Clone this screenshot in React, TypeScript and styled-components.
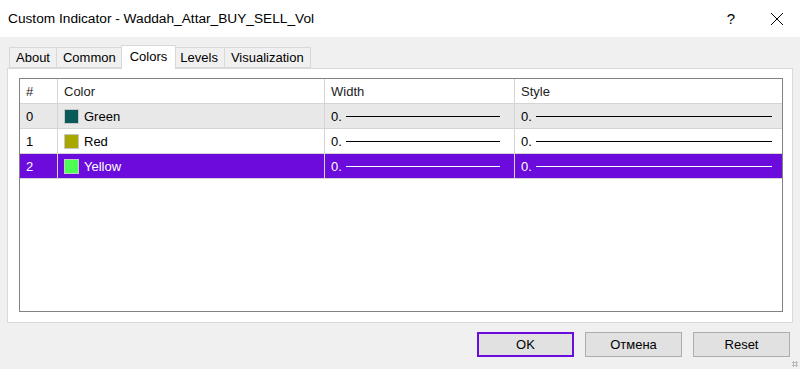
import styled, { createGlobalStyle } from "styled-components";

const GlobalStyle = createGlobalStyle`
  html, body {
    margin: 0;
    padding: 0;
    background: #f0f0f0;
  }
  * {
    box-sizing: border-box;
  }
`;

const Window = styled.div`
  position: relative;
  width: 800px;
  height: 369px;
  display: flex;
  flex-direction: column;
  background: #f0f0f0;
  font-family: "Liberation Sans", Arial, sans-serif;
  color: #000;
  overflow: hidden;
`;

const TitleBar = styled.div`
  height: 37px;
  display: flex;
  align-items: center;
  background: #fff;
  padding-left: 8px;
`;

const Title = styled.div`
  flex: 1;
  font-size: 13.7px;
  color: #000;
`;

const TitleButton = styled.div`
  width: 46px;
  height: 37px;
  display: flex;
  align-items: center;
  justify-content: center;
  font-size: 15px;
  color: #000;
`;

const Body = styled.div`
  flex: 1;
  display: flex;
  flex-direction: column;
  padding: 8px 7px 0 7px;
`;

const TabStrip = styled.div`
  display: flex;
  align-items: flex-end;
  height: 23px;
  padding-left: 2px;
  position: relative;
  z-index: 1;
`;

const Tab = styled.div<{ $active?: boolean }>`
  height: ${(p) => (p.$active ? "24px" : "21px")};
  padding: ${(p) => (p.$active ? "0 8px 3px 8px" : "0 6px")};
  margin: ${(p) => (p.$active ? "0 -2px -1px -2px" : "0")};
  display: flex;
  align-items: center;
  font-size: 13px;
  background: ${(p) => (p.$active ? "#fff" : "#f0f0f0")};
  border: 1px solid #d9d9d9;
  border-bottom: ${(p) => (p.$active ? "none" : "1px solid #d9d9d9")};
  border-left: ${(p) => (p.$active ? "1px solid #d9d9d9" : "none")};
  position: relative;
  z-index: ${(p) => (p.$active ? 2 : 1)};
  &:first-child {
    border-left: 1px solid #d9d9d9;
  }
`;

const Panel = styled.div`
  height: 255px;
  background: #fff;
  border: 1px solid #d9d9d9;
  padding: 9px 9px 10px 11px;
  display: flex;
`;

const ListView = styled.div`
  flex: 1;
  border: 1px solid #828282;
  background: #fff;
  display: flex;
  flex-direction: column;
`;

const Row = styled.div<{ $bg: string; $fg: string }>`
  display: grid;
  grid-template-columns: 37px 267px 190px 1fr;
  height: 25px;
  background: ${(p) => p.$bg};
  color: ${(p) => p.$fg};
  border-bottom: 1px solid #d5d5d5;
  font-size: 13px;
`;

const Cell = styled.div<{ $first?: boolean }>`
  display: flex;
  align-items: center;
  padding-left: 6px;
  border-left: ${(p) => (p.$first ? "none" : "1px solid #d5d5d5")};
  white-space: nowrap;
  overflow: hidden;
`;

const Swatch = styled.span<{ $color: string }>`
  width: 15px;
  height: 15px;
  margin-right: 5px;
  background: ${(p) => p.$color};
  border: 1px solid #c8c8c8;
  flex: none;
`;

const LineSample = styled.span<{ $color: string; $right: number }>`
  flex: 1;
  height: 1px;
  margin-left: 4px;
  margin-right: ${(p) => p.$right}px;
  background: ${(p) => p.$color};
`;

const Footer = styled.div`
  display: flex;
  justify-content: flex-end;
  gap: 11px;
  padding: 9px 3px 0 0;
`;

const Button = styled.div<{ $focused?: boolean }>`
  width: 97px;
  height: 25px;
  display: flex;
  align-items: center;
  justify-content: center;
  font-size: 13px;
  background: #e1e1e1;
  border: ${(p) => (p.$focused ? "2px solid #6b0bdc" : "1px solid #adadad")};
`;

const Grip = styled.div`
  position: absolute;
  right: 2px;
  bottom: 2px;
  width: 6px;
  height: 6px;
  background-image: radial-gradient(circle, #b8b8b8 1px, transparent 1.2px);
  background-size: 3px 3px;
`;

interface ColorRow {
  id: number;
  name: string;
  color: string;
}

const rows: ColorRow[] = [
  { id: 0, name: "Green", color: "#0a5a5a" },
  { id: 1, name: "Red", color: "#a8a800" },
  { id: 2, name: "Yellow", color: "#4dff55" },
];

const tabs = ["About", "Common", "Colors", "Levels", "Visualization"];

export default function App() {
  const selected = 2;
  const hovered = 0;
  return (
    <>
      <GlobalStyle />
      <Window>
        <TitleBar>
          <Title>Custom Indicator - Waddah_Attar_BUY_SELL_Vol</Title>
          <TitleButton>?</TitleButton>
          <TitleButton>
            <svg width="14" height="14" viewBox="0 0 14 14">
              <path d="M1 1 L13 13 M13 1 L1 13" stroke="#000" strokeWidth="1" fill="none" />
            </svg>
          </TitleButton>
        </TitleBar>
        <Body>
          <TabStrip>
            {tabs.map((t) => (
              <Tab key={t} $active={t === "Colors"}>
                {t}
              </Tab>
            ))}
          </TabStrip>
          <Panel>
            <ListView>
              <Row $bg="#fff" $fg="#222">
                <Cell $first>#</Cell>
                <Cell>Color</Cell>
                <Cell>Width</Cell>
                <Cell>Style</Cell>
              </Row>
              {rows.map((r) => {
                const isSel = r.id === selected;
                const bg = isSel ? "#6b0bdc" : r.id === hovered ? "#e8e8e8" : "#fff";
                const fg = isSel ? "#fff" : "#000";
                return (
                  <Row key={r.id} $bg={bg} $fg={fg}>
                    <Cell $first>{r.id}</Cell>
                    <Cell>
                      <Swatch $color={r.color} />
                      {r.name}
                    </Cell>
                    <Cell>
                      0.
                      <LineSample $color={fg} $right={14} />
                    </Cell>
                    <Cell>
                      0.
                      <LineSample $color={fg} $right={10} />
                    </Cell>
                  </Row>
                );
              })}
            </ListView>
          </Panel>
          <Footer>
            <Button $focused>OK</Button>
            <Button>Отмена</Button>
            <Button>Reset</Button>
          </Footer>
        </Body>
        <Grip />
      </Window>
    </>
  );
}
